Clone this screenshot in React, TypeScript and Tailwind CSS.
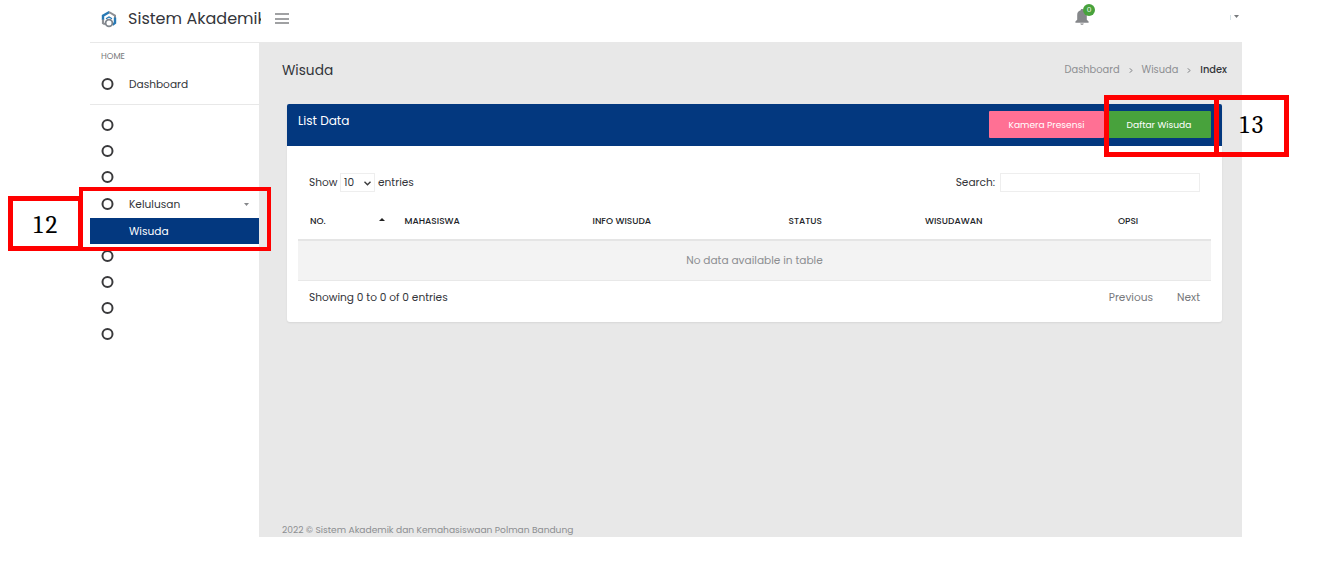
import type { ReactNode } from 'react';

function T({ c, children }: { c: string; children: ReactNode }) {
  return <span className={`whitespace-nowrap leading-none ${c}`}>{children}</span>;
}

function Ring() {
  return (
    <svg className="h-[13px] w-[13px] shrink-0" viewBox="0 0 13 13" fill="none">
      <circle cx="6.500" cy="6" r="5" stroke="#3a3a3c" strokeWidth="2" />
    </svg>
  );
}

function MenuRow({ c, label }: { c: string; label?: string }) {
  return (
    <div className={`flex items-center pl-[11px] ${c}`}>
      <Ring />
      {label && <T c="ml-[15px] pt-[2px] text-[10.6px] text-[#33353a]">{label}</T>}
    </div>
  );
}

function Logo() {
  return (
    <svg className="h-[18px] w-4 shrink-0" viewBox="0 0 16 18" fill="none">
      <path d="M2 10V5.800L8.500 2" stroke="#2779b5" strokeWidth="2.400" />
      <path d="M8 2L14 5.600V9" stroke="#8d9095" strokeWidth="2" />
      <path d="M14 7.500v5.500l-2.500 1.800" stroke="#2779b5" strokeWidth="2.400" />
      <path d="M2 9.500v3.700l2 1.200" stroke="#8d9095" strokeWidth="2.200" />
      <path d="M5 8.800L8 7l3 1.800" stroke="#2779b5" strokeWidth="1.200" />
      <circle cx="8" cy="13" r="3.400" stroke="#7f858c" strokeWidth="1.800" fill="#fff" />
    </svg>
  );
}

function Chevron() {
  return (
    <svg className="mx-[9px] mt-px h-[5px] w-1 shrink-0" viewBox="0 0 4 5" fill="none" stroke="#8c8e91" strokeWidth="1">
      <path d="M.5.3l2.800 2.200L.5 4.700" />
    </svg>
  );
}

function Header() {
  return (
    <header className="flex h-[42px] shrink-0 items-start bg-white">
      <div className="flex h-[42px] w-[169px] items-center pb-[5px] pl-[11px]">
        <Logo />
        <div className="-mr-1 ml-[11px] flex h-6 w-[133px] shrink-0 items-center overflow-hidden">
          <T c="pt-px text-[16px] tracking-[0.03px] text-[#33353a]">Sistem Akademik</T>
        </div>
      </div>
      <div className="flex h-[42px] flex-1 items-start">
        <div className="mt-[13px] ml-4 flex w-3.5 flex-col gap-[2.500px]">
          <span className="h-[2px] bg-[#a0a1a3]" />
          <span className="h-[2px] bg-[#a0a1a3]" />
          <span className="h-[2px] bg-[#a0a1a3]" />
        </div>
        <div className="relative mt-[9px] ml-[786px] h-4 w-3.5">
          <svg className="h-4 w-3.5" viewBox="0 0 14 16" fill="#85878a">
            <path d="M7 0c-.9 0-1.300.5-1.300 1.200C3.200 1.800 2.200 3.600 2.200 6v4.800L.4 12.600v1.200h13.200v-1.200l-1.800-1.800V6c0-2.400-1-4.200-3.500-4.800C8.300.5 7.900 0 7 0zM5.200 14.400c.2.800.9 1.400 1.800 1.400s1.600-.6 1.800-1.400z" />
          </svg>
          <span className="absolute -top-[5px] left-2 flex h-3 w-3 items-center justify-center rounded-full bg-[#48a23c] text-[7.500px] leading-none text-white">0</span>
        </div>
        <span className="mt-[15px] ml-[141px] h-[5px] w-px bg-[#d5e3e8]" />
        <svg className="mt-[15px] ml-[3px] h-[3px] w-[5px]" viewBox="0 0 5 3" fill="#77797c"><path d="M0 0h5L2.500 3z" /></svg>
      </div>
    </header>
  );
}

function Sidebar() {
  return (
    <aside className="w-[169px] shrink-0 border-t border-[#e8e8e8] bg-white">
      <div className="flex h-[27px] items-center pl-[11px]"><T c="text-[8.400px] text-[#77797c]">HOME</T></div>
      <MenuRow c="h-7" label="Dashboard" />
      <div className="-mt-[8px] mb-[7px] h-[15px] border-b border-[#e8e8e8]" />
      <MenuRow c="h-[26px]" />
      <MenuRow c="h-[26px]" />
      <MenuRow c="h-[26px]" />
      <div className="flex h-[28px] items-center">
        <MenuRow c="" label="Kelulusan" />
        <svg className="mr-[10px] ml-auto h-[3px] w-[5px]" viewBox="0 0 5 3" fill="#85878a"><path d="M0 0h5L2.500 3z" /></svg>
      </div>
      <div className="flex h-[26px] items-center bg-[#03387f] pt-[2px] pl-[39px]"><T c="text-[10.6px] text-white">Wisuda</T></div>
      <MenuRow c="h-[25px]" />
      <MenuRow c="h-[26px]" />
      <MenuRow c="h-[26px]" />
      <MenuRow c="h-[26px]" />
    </aside>
  );
}

function Card() {
  return (
    <section className="mr-5 ml-7 h-[218px] rounded-[3px] bg-white shadow-[0_1px_2px_rgba(0,0,0,0.08)]">
      <div className="flex h-[42px] items-start rounded-t-[2px] bg-[#03387f] pt-[7px] pr-[11px] pl-[11px]">
        <T c="mt-1 text-[12.1px] text-white">List Data</T>
        <div className="ml-auto flex gap-[3px]">
          <button className="flex h-[27px] w-[115px] items-center justify-center rounded-[1px] bg-[#ff7094]"><T c="pt-px text-[9.1px] text-white">Kamera Presensi</T></button>
          <button className="flex h-[27px] w-[104px] items-center justify-center rounded-[1px] bg-[#48a23c]"><T c="pt-px text-[9.1px] text-white">Daftar Wisuda</T></button>
        </div>
      </div>
      <div className="mt-[27px] flex h-[19px] items-center pr-[22px] pl-[22px] text-[#33353a]">
        <T c="w-[31px] pt-px text-[10.6px]">Show</T>
        <div className="flex h-[19px] w-[35px] items-center justify-between border border-[#eeeeee] px-[3px]">
          <T c="pt-px text-[10.6px]">10</T>
          <svg className="mt-px h-[5px] w-[7px]" viewBox="0 0 7 5" fill="none" stroke="#3a3a3c" strokeWidth="1.400"><path d="M.5.8l3 3 3-3" /></svg>
        </div>
        <T c="ml-[3px] pt-px text-[10.6px]">entries</T>
        <T c="ml-auto pt-px text-[10.6px]">Search:</T>
        <div className="ml-[5px] h-[19px] w-[200px] border border-[#eeeeee]" />
      </div>
      <div className="mx-[11px]">
        <div className="flex h-[49px] items-center border-b-2 border-[#e5e5e5] pt-[12px] text-[9px] font-medium text-[#222428]">
          <div className="flex w-[106.5px] items-center pl-3">
            <T c="">NO.</T>
            <svg className="mr-[20px] mb-[5px] ml-auto h-[3px] w-[6px]" viewBox="0 0 6 3" fill="#222"><path d="M0 3h6L3 0z" /></svg>
          </div>
          <div className="flex w-[188px]"><T c="">MAHASISWA</T></div>
          <div className="flex w-[196px]"><T c="">INFO WISUDA</T></div>
          <div className="flex w-[136.5px]"><T c="">STATUS</T></div>
          <div className="flex w-[193px]"><T c="">WISUDAWAN</T></div>
          <T c="">OPSI</T>
        </div>
        <div className="flex h-10 items-center justify-center border-b border-[#e8e8e8] bg-[#f3f3f3]"><T c="pt-px text-[10.6px] text-[#8c8e91]">No data available in table</T></div>
      </div>
      <div className="flex h-8 items-center px-[22px] pt-[2px]">
        <T c="text-[10.6px] text-[#33353a]">Showing 0 to 0 of 0 entries</T>
        <T c="ml-auto text-[10.6px] text-[#77797c]">Previous</T>
        <T c="ml-6 text-[10.6px] text-[#77797c]">Next</T>
      </div>
    </section>
  );
}

export default function App() {
  return (
    <div className="relative h-[562px] w-[1317px] overflow-hidden bg-white font-['Poppins','Inter',sans-serif]">
      <div className="ml-[90px] flex h-[537px] w-[1152px] flex-col">
        <Header />
        <div className="flex flex-1">
          <Sidebar />
          <main className="flex flex-1 flex-col bg-[#e8e8e8]">
            <div className="flex h-[62px] items-center pr-[15px] pb-[7px] pl-[23px]">
              <T c="pt-[2px] text-[13.7px] text-[#33353a]">Wisuda</T>
              <nav className="ml-auto flex items-center text-[9.850px] text-[#8c8e91]">
                <T c="">Dashboard</T>
                <Chevron />
                <T c="">Wisuda</T>
                <Chevron />
                <T c="font-medium text-[#33353a]">Index</T>
              </nav>
            </div>
            <Card />
            <T c="mt-auto mb-[3px] ml-[23px] text-[9.1px] text-[#8c8e91]">2022 © Sistem Akademik dan Kemahasiswaan Polman Bandung</T>
          </main>
        </div>
      </div>
      <div className="absolute top-[187px] left-[79px] h-16 w-48 border-[4.500px] border-[#ff0000]" />
      <div className="absolute top-[196px] left-2 flex h-[55px] w-[75px] items-center justify-center border-[5px] border-[#ff0000] pt-px pl-[3px] font-['Cambria','Liberation_Serif',serif] text-[25px] leading-none tracking-[3px] text-black">12</div>
      <div className="absolute top-[95px] left-[1104px] h-[62px] w-[115px] border-[5px] border-[#ff0000]" />
      <div className="absolute top-[95px] left-[1214px] flex h-[62px] w-[75px] items-center justify-center border-[5px] border-[#ff0000] pb-[4px] pl-[3px] font-['Cambria','Liberation_Serif',serif] text-[25px] leading-none tracking-[3px] text-black">13</div>
    </div>
  );
}
